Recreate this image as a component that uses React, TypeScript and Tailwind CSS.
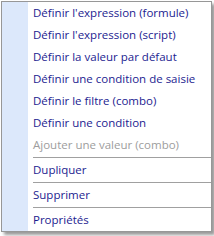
import React from 'react';

type Entry = { label: string; disabled?: boolean } | 'sep';

const entries: Entry[] = [
  { label: "Définir l'expression (formule)" },
  { label: "Définir l'expression (script)" },
  { label: 'Définir la valeur par défaut' },
  { label: 'Définir une condition de saisie' },
  { label: 'Définir le filtre (combo)' },
  { label: 'Définir une condition' },
  { label: 'Ajouter une valeur (combo)', disabled: true },
  'sep',
  { label: 'Dupliquer' },
  'sep',
  { label: 'Supprimer' },
  'sep',
  { label: 'Propriétés' },
];

function App() {
  return (
    <div className="w-[214px] h-[236px] bg-white pl-[1px] pt-[1px] overflow-hidden">
      {/* Context menu */}
      <div
        className="w-[211px] flex border border-[#979797] bg-white shadow-[3px_3px_3px_rgba(0,0,0,0.4)]"
        style={{ fontFamily: '"Open Sans", "Noto Sans", sans-serif' }}
      >
        <div className="w-[26px] shrink-0 bg-[#dce8fb]" />
        <ul className="flex-1">
          {entries.map((e, i) =>
            e === 'sep' ? (
              <li key={i} className="h-[3px] pl-[5px] flex items-center">
                <div className="h-px w-full bg-[#a0a0a0]" />
              </li>
            ) : (
              <li
                key={i}
                className={`h-[22px] pl-[5px] flex items-center text-[11.5px] whitespace-nowrap ${
                  e.disabled ? 'text-[#9d9d9d]' : 'text-[#1c1c90]'
                }`}
              >
                {e.label}
              </li>
            )
          )}
        </ul>
      </div>
    </div>
  );
}

export default App;
